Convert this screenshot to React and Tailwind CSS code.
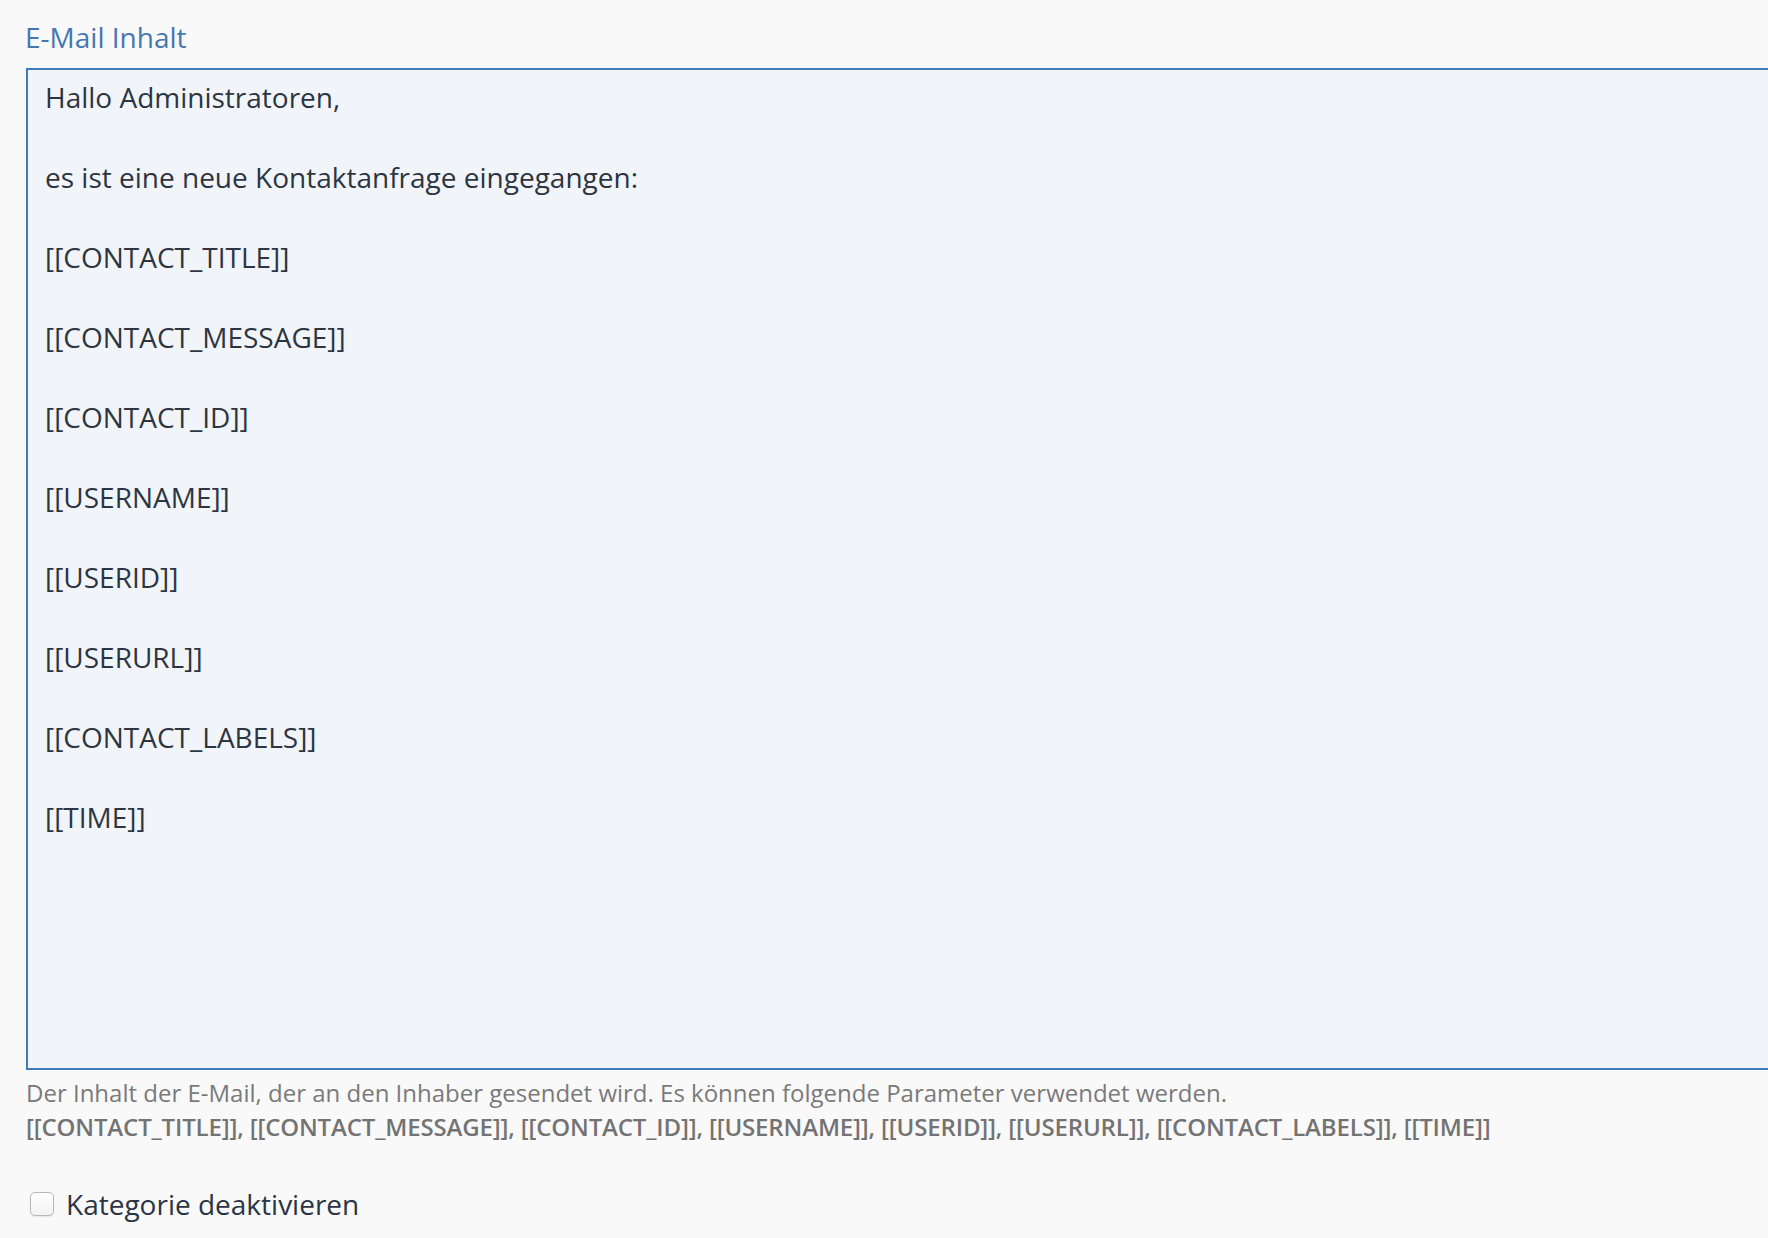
import React from 'react';

const lines = [
  'Hallo Administratoren,',
  'es ist eine neue Kontaktanfrage eingegangen:',
  '[[CONTACT_TITLE]]',
  '[[CONTACT_MESSAGE]]',
  '[[CONTACT_ID]]',
  '[[USERNAME]]',
  '[[USERID]]',
  '[[USERURL]]',
  '[[CONTACT_LABELS]]',
  '[[TIME]]',
];

const params = '[[CONTACT_TITLE]], [[CONTACT_MESSAGE]], [[CONTACT_ID]], [[USERNAME]], [[USERID]], [[USERURL]], [[CONTACT_LABELS]], [[TIME]]';

export default function App() {
  return (
    <div
      className="w-full h-screen overflow-hidden bg-[#f9f9f9] pl-[26px] pt-[17px]"
      style={{ fontFamily: '"Open Sans", "Noto Sans", sans-serif' }}
    >
      <label className="block -ml-[1px] text-[28px] leading-[40px] text-[#4677b1]">
        E-Mail Inhalt
      </label>

      {/* content box, runs past the right edge */}
      <div className="mt-[11px] w-[1820px] h-[1002px] border-2 border-[#3f7bb7] bg-[#f1f5fa] pt-[7px] pl-[17px] text-[28px] leading-[40px] text-[#2d3542]">
        {lines.map((line, i) => (
          <div key={i} className={i > 0 ? 'mt-[40px]' : ''}>
            {line}
          </div>
        ))}
      </div>

      <div className="mt-[6px] text-[24px] leading-[34px] text-[#7a7a7a]">
        <p>Der Inhalt der E-Mail, der an den Inhaber gesendet wird. Es können folgende Parameter verwendet werden.</p>
        <p className="font-semibold tracking-[-0.15px] text-[#737373]">{params}</p>
      </div>

      <div className="mt-[40px] ml-[4px] flex items-center gap-[12px]">
        <span className="block w-[24px] h-[24px] rounded-[5px] border border-[#b8b8b8] bg-gradient-to-b from-white to-[#f3f3f3] shadow-[0_1px_1px_rgba(0,0,0,0.08)]" />
        <span className="text-[28px] leading-[40px] text-[#2b3444]">Kategorie deaktivieren</span>
      </div>
    </div>
  );
}
